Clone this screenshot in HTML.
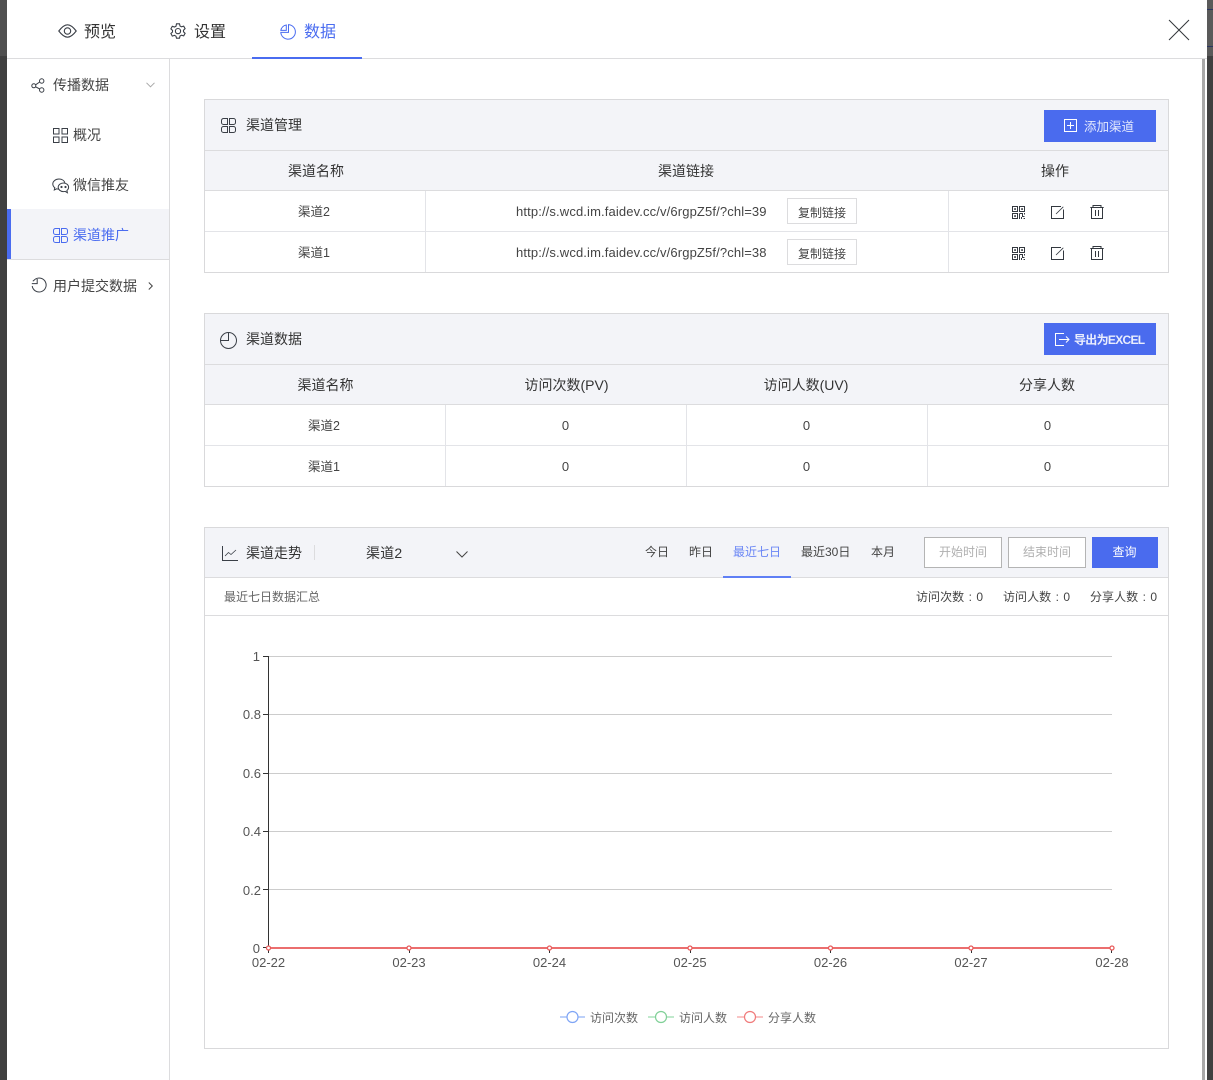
<!DOCTYPE html>
<html lang="zh"><head><meta charset="utf-8"><title>数据</title>
<style>
html,body{margin:0;padding:0;width:1213px;height:1080px;overflow:hidden;background:#fff}
body{position:relative;font-family:"Liberation Sans","Noto Sans CJK SC",sans-serif;color:#444}
.a{position:absolute}
.t{position:absolute;white-space:nowrap;line-height:20px;height:20px}
.c{text-align:center}
.s12{font-size:12px}.s125{font-size:12.5px}.s13{font-size:13px}.s14{font-size:14px}.s16{font-size:16px}
.blue{color:#4a6cf0}
svg{position:absolute;overflow:visible;fill:none}
.hl{position:absolute;height:1px;background:#e3e4e8}
.vl{position:absolute;width:1px;background:#e3e4e8}
.box{position:absolute;box-sizing:border-box;border:1px solid #d9d9db}
.head{position:absolute;background:#f3f4f8}
.btn{position:absolute;background:#4a6bee}
.url{font-size:13px;letter-spacing:.13px;color:#444}
</style></head><body>
<!-- window edges -->
<div class="a" style="left:0;top:0;width:7px;height:56px;background:#505050"></div>
<div class="a" style="left:0;top:56px;width:7px;height:1024px;background:#404040"></div>
<div class="a" style="left:1207px;top:0;width:6px;height:56px;background:#5a5a5a"></div>
<div class="a" style="left:1207px;top:9px;width:6px;height:1px;background:#2b3560"></div>
<div class="a" style="left:1207px;top:46px;width:6px;height:1px;background:#2b3560"></div>
<div class="a" style="left:1207px;top:56px;width:6px;height:1024px;background:#404040"></div>
<div class="a" style="left:1202px;top:59px;width:3px;height:1021px;background:#a9a9a9"></div>

<!-- top nav -->
<div class="hl" style="left:7px;top:58px;width:1200px;background:#dcdcde"></div>
<div class="a" style="left:252px;top:57px;width:110px;height:2px;background:#4a6cf0"></div>
<svg style="left:58px;top:24px" width="20" height="15" stroke="#3a3f47" stroke-width="1.1"><path d="M.8 7C4 2.800 7 .8 9.500 .8S15 2.800 18.200 7C15 11.200 12 13.200 9.500 13.200S4 11.200 .8 7Z"/><circle cx="9.500" cy="7" r="3.200"/></svg>
<div class="t s16" style="left:84px;top:23px;color:#333">预览</div>
<svg style="left:170px;top:23px" width="16" height="16" stroke="#3a3f47" stroke-width="1.100"><path d="M6.500.8h3l.5 2.200 1.500.8 2.200-.7 1.400 2.600-1.600 1.500v1.600l1.600 1.500-1.400 2.600-2.200-.7-1.500.8-.5 2.200h-3L6 13.200l-1.500-.8-2.200.7L.9 10.500l1.600-1.500V7.400L.9 5.900l1.400-2.600 2.200.7L6 3.200Z"/><circle cx="8" cy="8.100" r="2.600"/></svg>
<div class="t s16" style="left:194px;top:23px;color:#333">设置</div>
<svg style="left:280px;top:23.500px" width="16" height="16" stroke="#4a6cf0" stroke-width="1"><path d="M8.500 .6A7.300 7.300 0 1 1 .8 8.400H8.500Z"/><path d="M6.300 1A6.500 6.500 0 0 0 .8 6.400H6.300Z"/></svg>
<div class="t s16 blue" style="left:304px;top:23px">数据</div>
<svg style="left:1169px;top:20px" width="20" height="20" stroke="#33363b" stroke-width="1"><path d="M0 0L20 20M20 0L0 20"/></svg>

<!-- side -->
<div class="vl" style="left:169px;top:59px;height:1021px;background:#dcdcde"></div>
<div class="a" style="left:7px;top:209px;width:162px;height:50px;background:#f3f4f8"></div>
<div class="a" style="left:7px;top:209px;width:4px;height:50px;background:#4a6cf0"></div>
<div class="hl" style="left:7px;top:259px;width:162px;background:#dcdcde"></div>

<svg style="left:31px;top:78px" width="14" height="15" stroke="#3a3f47" stroke-width="1"><circle cx="2.800" cy="7.800" r="2"/><circle cx="10.700" cy="3" r="2.200"/><circle cx="10.700" cy="12" r="2.200"/><path d="M4.600 6.800L8.700 4M4.600 8.800L8.800 11"/></svg>
<div class="t s14" style="left:53px;top:75px;color:#444">传播数据</div>
<svg style="left:146px;top:82px" width="9" height="6" stroke="#a8a8a8" stroke-width="1"><path d="M.5 .8L4.500 4.800L8.500 .8"/></svg>

<svg style="left:53px;top:128px" width="15" height="15" stroke="#3a3f47" stroke-width="1"><rect x=".5" y=".5" width="5.500" height="5.500"/><rect x="9" y=".5" width="5.500" height="5.500"/><rect x=".5" y="9" width="5.500" height="5.500"/><rect x="9" y="9" width="5.500" height="5.500"/></svg>
<div class="t s14" style="left:73px;top:125px;color:#444">概况</div>

<svg style="left:52px;top:178px" width="18" height="16" stroke="#3a3f47" stroke-width="1"><path d="M7 1C3.500 1 .8 3.300.8 6c0 1.500.8 2.800 2 3.700L2.300 12l2.400-1.200c.6.200 1.200.3 1.800.3"/><path d="M7 1c2.800 0 5.200 1.500 5.900 3.800"/><path d="M11.500 5C8.500 5 6.200 7 6.200 9.300s2.300 4.300 5.300 4.300c.6 0 1.100-.1 1.700-.2l2.200 1.300-.5-2.200c1-.8 1.700-2 1.700-3.200C16.600 7 14.400 5 11.500 5Z"/><circle cx="9.500" cy="9" r=".6" fill="#3a3f47"/><circle cx="13.500" cy="9" r=".6" fill="#3a3f47"/></svg>
<div class="t s14" style="left:73px;top:175px;color:#444">微信推友</div>

<svg style="left:53px;top:228px" width="15" height="15" stroke="#4a6cf0" stroke-width="1"><path d="M6.500 .5H2.500a2 2 0 0 0-2 2V4.500a2 2 0 0 0 2 2H6.500Z"/><path d="M8.500 .5H12.500a2 2 0 0 1 2 2V4.500a2 2 0 0 1-2 2H8.500Z"/><path d="M6.500 8.500H2.500a2 2 0 0 0-2 2V12.500a2 2 0 0 0 2 2H6.500Z"/><path d="M8.500 8.500H12.500a2 2 0 0 1 2 2V12.500a2 2 0 0 1-2 2H8.500Z"/></svg>
<div class="t s14 blue" style="left:73px;top:225px">渠道推广</div>

<svg style="left:31px;top:278px" width="16" height="16" stroke="#3a3f47" stroke-width="1"><path d="M4.200 1.200A7 7 0 1 1 1.200 8"/><path d="M.8 5.600H6.200V1M1.800 3.300L4.200 1.200"/></svg>
<div class="t s14" style="left:53px;top:276px;color:#444">用户提交数据</div>
<svg style="left:147.500px;top:282px" width="5" height="8" stroke="#444" stroke-width="1"><path d="M.8 .5L4.300 4L.8 7.500"/></svg>

<!-- Panel 1 -->
<div class="head" style="left:205px;top:100px;width:963px;height:90px"></div>
<div class="box" style="left:204px;top:99px;width:965px;height:174px"></div>
<div class="hl" style="left:205px;top:150px;width:963px;background:#dcdcde"></div>
<div class="hl" style="left:205px;top:190px;width:963px;background:#dcdcde"></div>
<div class="hl" style="left:205px;top:231px;width:963px"></div>
<div class="vl" style="left:425px;top:191px;height:81px"></div>
<div class="vl" style="left:948px;top:191px;height:81px"></div>
<svg style="left:221px;top:118px" width="15" height="15" stroke="#3a3f47" stroke-width="1"><path d="M6.500 .5H2.500a2 2 0 0 0-2 2V4.500a2 2 0 0 0 2 2H6.500Z"/><path d="M8.500 .5H12.500a2 2 0 0 1 2 2V4.500a2 2 0 0 1-2 2H8.500Z"/><path d="M6.500 8.500H2.500a2 2 0 0 0-2 2V12.500a2 2 0 0 0 2 2H6.500Z"/><path d="M8.500 8.500H12.500a2 2 0 0 1 2 2V12.500a2 2 0 0 1-2 2H8.500Z"/></svg>
<div class="t s14" style="left:246px;top:115px;color:#333">渠道管理</div>
<div class="btn" style="left:1044px;top:110px;width:112px;height:32px"></div>
<svg style="left:1064px;top:119px" width="13" height="13" stroke="#fff" stroke-width="1"><rect x=".5" y=".5" width="12" height="12"/><path d="M3 6.500H10M6.500 3V10"/></svg>
<div class="t s125" style="left:1084px;top:117px;color:#e4e9fd">添加渠道</div>

<div class="t s14 c" style="left:205px;top:161px;width:222px;color:#333">渠道名称</div>
<div class="t s14 c" style="left:425px;top:161px;width:522px;color:#333">渠道链接</div>
<div class="t s14 c" style="left:961px;top:161px;width:188px;color:#333">操作</div>

<div class="t s125 c" style="left:204px;top:202px;width:220px;color:#444">渠道2</div>
<div class="t s125 c" style="left:204px;top:243px;width:220px;color:#444">渠道1</div>
<div class="t url" style="left:516px;top:202px">http://s.wcd.im.faidev.cc/v/6rgpZ5f/?chl=39</div>
<div class="t url" style="left:516px;top:243px">http://s.wcd.im.faidev.cc/v/6rgpZ5f/?chl=38</div>
<div class="box c s12" style="left:787px;top:198px;width:70px;height:26px;padding-top:1px;line-height:26px;color:#444;border-color:#dcdcde">复制链接</div>
<div class="box c s12" style="left:787px;top:239px;width:70px;height:26px;padding-top:1px;line-height:26px;color:#444;border-color:#dcdcde">复制链接</div>

<svg style="left:1012px;top:206px" width="13" height="13" stroke="#33383f" stroke-width="1"><rect x=".5" y=".5" width="5" height="5"/><rect x="7.500" y=".5" width="5" height="5"/><rect x=".5" y="7.500" width="5" height="5"/><rect x="2.200" y="2.200" width="1.700" height="1.700" fill="#33383f" stroke="none"/><rect x="9.200" y="2.200" width="1.700" height="1.700" fill="#33383f" stroke="none"/><rect x="2.200" y="9.200" width="1.700" height="1.700" fill="#33383f" stroke="none"/><path d="M7.500 7.500H10.500V10.500H12.500M12.500 7V8.500M7.500 7.500V13M9.500 11V13M11.500 12.500H13"/></svg>
<svg style="left:1051px;top:206px" width="13" height="13" stroke="#33383f" stroke-width="1"><path d="M10 .5H.5V12.500H12.500V3.500"/><path d="M5 8L12.300 .8" stroke-width=".8"/></svg>
<svg style="left:1090px;top:205px" width="14" height="14" stroke="#33383f" stroke-width="1"><path d="M.3 2.500H13.700M1.500 2.500V13.500H12.500V2.500M3 2.500V.5H11V2.500M5.500 5V11M8.500 5V11"/></svg>
<svg style="left:1012px;top:247px" width="13" height="13" stroke="#33383f" stroke-width="1"><rect x=".5" y=".5" width="5" height="5"/><rect x="7.500" y=".5" width="5" height="5"/><rect x=".5" y="7.500" width="5" height="5"/><rect x="2.200" y="2.200" width="1.700" height="1.700" fill="#33383f" stroke="none"/><rect x="9.200" y="2.200" width="1.700" height="1.700" fill="#33383f" stroke="none"/><rect x="2.200" y="9.200" width="1.700" height="1.700" fill="#33383f" stroke="none"/><path d="M7.500 7.500H10.500V10.500H12.500M12.500 7V8.500M7.500 7.500V13M9.500 11V13M11.500 12.500H13"/></svg>
<svg style="left:1051px;top:247px" width="13" height="13" stroke="#33383f" stroke-width="1"><path d="M10 .5H.5V12.500H12.500V3.500"/><path d="M5 8L12.300 .8" stroke-width=".8"/></svg>
<svg style="left:1090px;top:246px" width="14" height="14" stroke="#33383f" stroke-width="1"><path d="M.3 2.500H13.700M1.500 2.500V13.500H12.500V2.500M3 2.500V.5H11V2.500M5.500 5V11M8.500 5V11"/></svg>

<!-- Panel 2 -->
<div class="head" style="left:205px;top:314px;width:963px;height:90px"></div>
<div class="box" style="left:204px;top:313px;width:965px;height:174px"></div>
<div class="hl" style="left:205px;top:364px;width:963px;background:#dcdcde"></div>
<div class="hl" style="left:205px;top:404px;width:963px;background:#dcdcde"></div>
<div class="hl" style="left:205px;top:445px;width:963px"></div>
<div class="vl" style="left:445px;top:405px;height:81px"></div>
<div class="vl" style="left:686px;top:405px;height:81px"></div>
<div class="vl" style="left:927px;top:405px;height:81px"></div>
<svg style="left:220px;top:332px" width="17" height="17" stroke="#3a3f47" stroke-width="1"><circle cx="8.500" cy="8.500" r="8"/><path d="M8.500 .5V8.500H.5"/></svg>
<div class="t s14" style="left:246px;top:329px;color:#333">渠道数据</div>
<div class="btn" style="left:1044px;top:323px;width:112px;height:32px"></div>
<svg style="left:1055px;top:333px" width="15" height="13" stroke="#fff" stroke-width="1"><path d="M9 .5H.5V12.500H9M4 6.500H14M11 3.500L14 6.500L11 9.500"/></svg>
<div class="t s12" style="left:1074px;top:330px;color:#e9edfd;font-weight:bold;letter-spacing:-.7px">导出为EXCEL</div>

<div class="t s14 c" style="left:205px;top:375px;width:241px;color:#333">渠道名称</div>
<div class="t s14 c" style="left:446px;top:375px;width:241px;color:#333">访问次数(PV)</div>
<div class="t s14 c" style="left:686px;top:375px;width:240px;color:#333">访问人数(UV)</div>
<div class="t s14 c" style="left:927px;top:375px;width:240px;color:#333">分享人数</div>
<div class="t s125 c" style="left:204px;top:416px;width:240px;color:#444">渠道2</div>
<div class="t s13 c" style="left:446px;top:416px;width:239px;color:#444">0</div>
<div class="t s13 c" style="left:687px;top:416px;width:239px;color:#444">0</div>
<div class="t s13 c" style="left:928px;top:416px;width:239px;color:#444">0</div>
<div class="t s125 c" style="left:204px;top:457px;width:240px;color:#444">渠道1</div>
<div class="t s13 c" style="left:446px;top:457px;width:239px;color:#444">0</div>
<div class="t s13 c" style="left:687px;top:457px;width:239px;color:#444">0</div>
<div class="t s13 c" style="left:928px;top:457px;width:239px;color:#444">0</div>

<!-- Panel 3 -->
<div class="head" style="left:205px;top:528px;width:963px;height:49px"></div>
<div class="box" style="left:204px;top:527px;width:965px;height:522px"></div>
<div class="hl" style="left:205px;top:577px;width:963px;background:#dcdcde"></div>
<div class="hl" style="left:205px;top:615px;width:963px;background:#dcdcde"></div>
<svg style="left:222px;top:546px" width="16" height="15" stroke="#3a3f47" stroke-width="1"><path d="M.5 0V14.500H16"/><path d="M3 10L6.500 6.500L9 8.500L14 4" stroke-width=".8"/></svg>
<div class="t s14" style="left:246px;top:543px;color:#333">渠道走势</div>
<div class="vl" style="left:314px;top:545px;height:15px;background:#dcdcde"></div>
<div class="t s14" style="left:366px;top:543px;color:#333;letter-spacing:.2px">渠道2</div>
<svg style="left:456px;top:551px" width="12" height="7" stroke="#444" stroke-width="1"><path d="M.5 .5L6 6L11.500 .5"/></svg>

<div class="t s12" style="left:645px;top:542px;color:#444">今日</div>
<div class="t s12" style="left:689px;top:542px;color:#444">昨日</div>
<div class="t s12" style="left:733px;top:542px;color:#6a86f5">最近七日</div>
<div class="t s12" style="left:801px;top:542px;color:#444">最近30日</div>
<div class="t s12" style="left:871px;top:542px;color:#444">本月</div>
<div class="a" style="left:723px;top:576px;width:68px;height:2px;background:#5f7ff5"></div>
<div class="box c s12" style="left:924px;top:537px;width:78px;height:31px;line-height:29px;color:#b0b0b0;background:#fff;border-color:#b4b4b4">开始时间</div>
<div class="box c s12" style="left:1008px;top:537px;width:78px;height:31px;line-height:29px;color:#b0b0b0;background:#fff;border-color:#b4b4b4">结束时间</div>
<div class="btn c s12" style="left:1092px;top:537px;width:66px;height:31px;line-height:31px;color:#fff;text-indent:-1px">查询</div>

<div class="t s12" style="left:224px;top:587px;color:#666">最近七日数据汇总</div>
<div class="t s12" style="left:916px;top:587px;color:#444;word-spacing:1px;letter-spacing:.05px">访问次数 : 0</div>
<div class="t s12" style="left:1003px;top:587px;color:#444;word-spacing:1px;letter-spacing:.05px">访问人数 : 0</div>
<div class="t s12" style="left:1090px;top:587px;color:#444;word-spacing:1px;letter-spacing:.05px">分享人数 : 0</div>

<!-- chart -->
<svg style="left:0;top:0" width="1213" height="1080" font-family="Liberation Sans, sans-serif" font-size="13">
<g stroke="#ccc" stroke-width="1">
<path d="M264 656.500H1112M264 714.500H1112M264 773.500H1112M264 831.500H1112M264 889.500H1112"/>
</g>
<g stroke="#333" stroke-width="1">
<path d="M268.500 656V953M263 656.500H269M263 714.500H269M263 773.500H269M263 831.500H269M263 889.500H269M263 947.500H269"/>
<path d="M409.500 948V953M549.500 948V953M690.500 948V953M830.500 948V953M971.500 948V953M1111.500 948V953"/>
</g>
<g fill="#555" text-anchor="end">
<text x="260" y="661">1</text><text x="261" y="719">0.8</text><text x="261" y="778">0.6</text><text x="261" y="836">0.4</text><text x="261" y="895">0.2</text><text x="260" y="953">0</text>
</g>
<g fill="#555" text-anchor="middle">
<text x="268.500" y="967">02-22</text><text x="409" y="967">02-23</text><text x="549.500" y="967">02-24</text><text x="690" y="967">02-25</text><text x="830.500" y="967">02-26</text><text x="971" y="967">02-27</text><text x="1112" y="967">02-28</text>
</g>
<path d="M268 948H1112" stroke="#e85a5a" stroke-width="1.800"/>
<g fill="#fff" stroke="#e85a5a" stroke-width="1.300">
<circle cx="268.500" cy="948" r="2"/><circle cx="409" cy="948" r="2"/><circle cx="549.500" cy="948" r="2"/><circle cx="690" cy="948" r="2"/><circle cx="830.500" cy="948" r="2"/><circle cx="971" cy="948" r="2"/><circle cx="1112" cy="948" r="2"/>
</g>
<g fill="#fff" stroke-width="1.200">
<path d="M560 1017H585" stroke="#94b4f5"/><circle cx="572.500" cy="1017" r="5.500" stroke="#7fa5f5"/>
<path d="M648 1017H674" stroke="#9adcae"/><circle cx="661" cy="1017" r="5.500" stroke="#80d097"/>
<path d="M737 1017H763" stroke="#f5a0a0"/><circle cx="750" cy="1017" r="5.500" stroke="#f07a7a"/>
</g>
</svg>
<div class="t s12" style="left:590px;top:1008px;color:#666">访问次数</div>
<div class="t s12" style="left:679px;top:1008px;color:#666">访问人数</div>
<div class="t s12" style="left:768px;top:1008px;color:#666">分享人数</div>
</body></html>
